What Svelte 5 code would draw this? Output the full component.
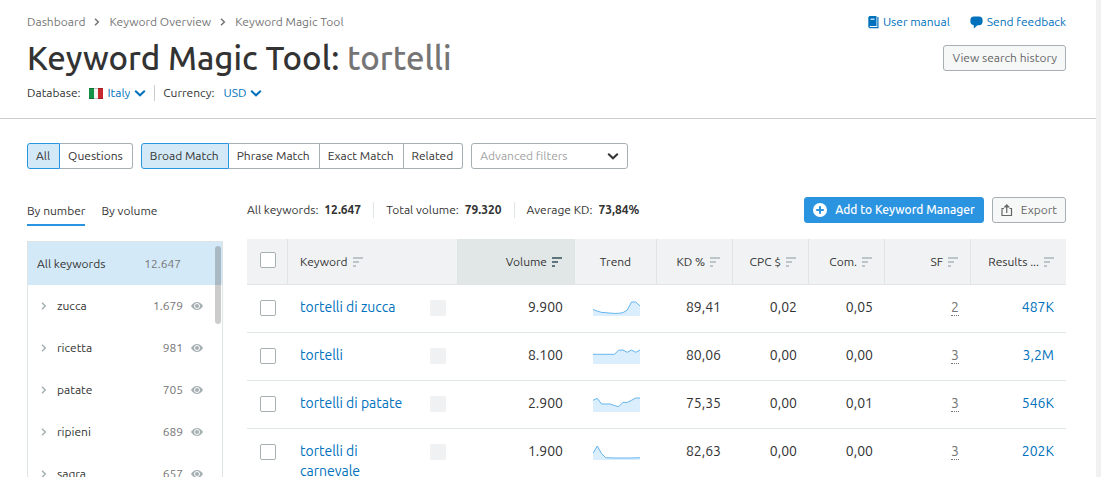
<script lang="ts">
	interface Keyword {
		phrase: string;
		volume: string;
		trend: number[];
		kd: string;
		cpc: string;
		com: string;
		sf: string;
		results: string;
	}

	const crumbs = ['Dashboard', 'Keyword Overview', 'Keyword Magic Tool'];
	const scopes = ['All', 'Questions'];
	const matches = ['Broad Match', 'Phrase Match', 'Exact Match', 'Related'];
	const tabs = ['By number', 'By volume'];

	const stats = [
		{ label: 'All keywords:', value: '12.647' },
		{ label: 'Total volume:', value: '79.320' },
		{ label: 'Average KD:', value: '73,84%' }
	];

	const groups = [
		{ name: 'zucca', count: '1.679' },
		{ name: 'ricetta', count: '981' },
		{ name: 'patate', count: '705' },
		{ name: 'ripieni', count: '689' },
		{ name: 'sagra', count: '657' }
	];

	const columns = [
		{ id: 'keyword', title: 'Keyword', sortable: true },
		{ id: 'volume', title: 'Volume', sortable: true },
		{ id: 'trend', title: 'Trend', sortable: false },
		{ id: 'kd', title: 'KD %', sortable: true },
		{ id: 'cpc', title: 'CPC $', sortable: true },
		{ id: 'com', title: 'Com.', sortable: true },
		{ id: 'sf', title: 'SF', sortable: true },
		{ id: 'results', title: 'Results ...', sortable: true }
	];

	const keywords: Keyword[] = [
		{
			phrase: 'tortelli di zucca',
			volume: '9.900',
			trend: [42, 30, 20, 18, 15, 12, 13, 18, 38, 100, 100, 70],
			kd: '89,41',
			cpc: '0,02',
			com: '0,05',
			sf: '2',
			results: '487K'
		},
		{
			phrase: 'tortelli',
			volume: '8.100',
			trend: [67, 67, 67, 67, 67, 67, 98, 100, 82, 100, 82, 100],
			kd: '80,06',
			cpc: '0,00',
			com: '0,00',
			sf: '3',
			results: '3,2M'
		},
		{
			phrase: 'tortelli di patate',
			volume: '2.900',
			trend: [82, 98, 54, 54, 54, 42, 34, 66, 66, 82, 100, 100],
			kd: '75,35',
			cpc: '0,00',
			com: '0,01',
			sf: '3',
			results: '546K'
		},
		{
			phrase: 'tortelli di carnevale',
			volume: '1.900',
			trend: [44, 100, 42, 9, 9, 8, 8, 8, 8, 8, 9, 9],
			kd: '82,63',
			cpc: '0,00',
			com: '0,00',
			sf: '3',
			results: '202K'
		}
	];

	let scope = $state('All');
	let match = $state('Broad Match');
	let tab = $state('By number');
	let sortBy = $state('volume');
	let selected = $state<string[]>([]);

	function toggleAll() {
		selected = selected.length === keywords.length ? [] : keywords.map((k) => k.phrase);
	}

	function trendLine(values: number[]): string {
		const step = 47 / (values.length - 1);
		return values.map((v, i) => `${(i * step).toFixed(1)},${(15 - v * 0.13).toFixed(1)}`).join(' ');
	}
</script>

{#snippet chevronDown()}
	<svg class="chevron-down" viewBox="0 0 12 8" width="12" height="8" aria-hidden="true">
		<path d="M1.2 1.700 6 6.300l4.800-4.600" />
	</svg>
{/snippet}

{#snippet chevronRight()}
	<svg class="chevron-right" viewBox="0 0 6 8" width="6" height="8" aria-hidden="true">
		<path d="M1 .8 4.300 4 1 7.200" />
	</svg>
{/snippet}

<div class="page">
	<header>
		<div class="header-row">
			<nav class="breadcrumbs" aria-label="Breadcrumb">
				{#each crumbs as crumb, i}
					{#if i > 0}{@render chevronRight()}{/if}
					<a href="#{i}">{crumb}</a>
				{/each}
			</nav>
			<div class="help-links">
				<a href="#manual">
					<svg viewBox="0 0 11 13" width="11" height="13" aria-hidden="true">
						<path d="M1.500 0H8.500V10H1.700V11H9.300V1H10.500V12.200H1.500L.300 11V1.200Z" fill="#0071bc" />
						<path d="M2.500 2.500h4v1.500h-4z" fill="#b5d8f0" />
					</svg>
					User manual
				</a>
				<a href="#feedback">
					<svg viewBox="0 0 13 13" width="13" height="13" aria-hidden="true">
						<path
							d="M4 .5h5a3.600 3.600 0 0 1 3.600 3.600v1.500A3.600 3.600 0 0 1 9 9.200H7.500L3.800 12.500V9.200A3.600 3.600 0 0 1 .4 5.600V4.100A3.600 3.600 0 0 1 4 .5z"
							fill="#0071bc"
						/>
					</svg>
					Send feedback
				</a>
			</div>
		</div>
		<div class="header-row title-row">
			<h1>Keyword Magic Tool: <span>tortelli</span></h1>
			<button class="button">View search history</button>
		</div>
		<div class="settings">
			<div class="setting">
				<label for="database">Database:</label>
				<svg class="flag" viewBox="0 0 14 11" width="14" height="11" aria-hidden="true">
					<path d="M0 0h5v11H0z" fill="#149247" />
					<path d="M5 0h4v11H5z" fill="#f4f4f0" />
					<path d="M9 0h5v11H9z" fill="#c8272d" />
					<path d="M0 .5h14M0 10.500h14" stroke="#000" stroke-opacity=".2" />
				</svg>
				<select id="database"><option>Italy</option></select>
				{@render chevronDown()}
			</div>
			<div class="setting">
				<label for="currency">Currency:</label>
				<select id="currency"><option>USD</option></select>
				{@render chevronDown()}
			</div>
		</div>
	</header>

	<div class="filters">
		<div class="pills">
			{#each scopes as item}
				<button class:active={scope === item} onclick={() => (scope = item)}>{item}</button>
			{/each}
		</div>
		<div class="pills">
			{#each matches as item}
				<button class:active={match === item} onclick={() => (match = item)}>{item}</button>
			{/each}
		</div>
		<div class="advanced">
			<select aria-label="Advanced filters"><option>Advanced filters</option></select>
			{@render chevronDown()}
		</div>
	</div>

	<div class="content">
		<aside>
			<div class="tabs">
				{#each tabs as item}
					<button class:active={tab === item} onclick={() => (tab = item)}>{item}</button>
				{/each}
			</div>
			<div class="groups">
				<a class="group all" href="#all">
					<span class="name">All keywords</span>
					<span class="count">12.647</span>
				</a>
				{#each groups as group}
					<div class="group">
						{@render chevronRight()}
						<a class="name" href="#{group.name}">{group.name}</a>
						<span class="count">{group.count}</span>
						<button class="eye" aria-label="Exclude {group.name}">
							<svg viewBox="0 0 12 8" width="12" height="8" aria-hidden="true">
								<path d="M0 4Q2.500 0 6 0t6 4Q9.500 8 6 8T0 4z" fill="#a6b0b3" />
								<circle cx="6" cy="4" r="2.500" fill="none" stroke="#fff" />
							</svg>
						</button>
					</div>
				{/each}
				<div class="thumb"></div>
			</div>
		</aside>

		<main>
			<div class="toolbar">
				<dl class="stats">
					{#each stats as stat}
						<div>
							<dt>{stat.label}</dt>
							<dd>{stat.value}</dd>
						</div>
					{/each}
				</dl>
				<button class="button primary">
					<svg viewBox="0 0 14 14" width="14" height="14" aria-hidden="true">
						<circle cx="7" cy="7" r="7" fill="#fff" />
						<path d="M7 3.200v7.600M3.200 7h7.600" stroke="#2b94e1" stroke-width="2" />
					</svg>
					Add to Keyword Manager
				</button>
				<button class="button">
					<svg viewBox="0 0 12 12" width="12" height="12" aria-hidden="true">
						<path d="M3 4.500H1v7h9.500v-7h-2M5.750 9V2" fill="none" stroke="#666" stroke-width="1.200" />
						<path d="M5.750 0 9 3.500H2.500z" fill="#666" />
					</svg>
					Export
				</button>
			</div>

			<table>
				<colgroup>
					<col class="col-check" />
					{#each columns as column}
						<col class="col-{column.id}" />
					{/each}
				</colgroup>
				<thead>
					<tr>
						<th class="check">
							<input
								type="checkbox"
								aria-label="Select all"
								checked={selected.length === keywords.length}
								onchange={toggleAll}
							/>
						</th>
						{#each columns as column}
							<th class={column.id} class:sorted={sortBy === column.id}>
								{#if column.sortable}
									<button onclick={() => (sortBy = column.id)}>
										{column.title}
										<svg viewBox="0 0 10 10" width="10" height="10" aria-hidden="true">
											<path d="M0 0h10v2H0zM0 4h6v2H0zM0 8h3v2H0z" />
										</svg>
									</button>
								{:else}
									{column.title}
								{/if}
							</th>
						{/each}
					</tr>
				</thead>
				<tbody>
					{#each keywords as keyword}
						<tr>
							<td>
								<input
									type="checkbox"
									aria-label="Select {keyword.phrase}"
									value={keyword.phrase}
									bind:group={selected}
								/>
							</td>
							<td class="keyword">
								<div class="phrase">
									<a href="#{keyword.phrase}">{keyword.phrase}</a>
									<span class="placeholder"></span>
								</div>
							</td>
							<td>{keyword.volume}</td>
							<td class="trend">
								<svg viewBox="0 0 47 16" width="47" height="16" aria-hidden="true">
									<polygon points="0,16 {trendLine(keyword.trend)} 47,16" fill="#daeefd" />
									<polyline points={trendLine(keyword.trend)} fill="none" stroke="#63b4ee" />
								</svg>
							</td>
							<td>{keyword.kd}</td>
							<td>{keyword.cpc}</td>
							<td>{keyword.com}</td>
							<td><span class="features">{keyword.sf}</span></td>
							<td><a href="#results">{keyword.results}</a></td>
						</tr>
					{/each}
				</tbody>
			</table>
		</main>
	</div>
</div>

<style>
	:global(body) {
		overflow: hidden;
	}

	.page {
		box-sizing: border-box;
		height: 100vh;
		overflow: hidden;
		border-right: 5px solid #f1f1f1;
		background: #fff;
		color: #333;
		font-family: Ubuntu, 'Noto Sans', sans-serif;
		font-size: 12px;
		line-height: 16px;
	}

	a {
		color: #0071bc;
		text-decoration: none;
	}

	button,
	select {
		box-sizing: border-box;
		margin: 0;
		padding: 0;
		border: 0;
		background: none;
		color: inherit;
		font: inherit;
		cursor: pointer;
	}

	select {
		appearance: none;
	}

	svg {
		flex: none;
	}

	header {
		padding: 14px 30px 17px 27px;
		border-bottom: 1px solid #ccc;
	}

	.header-row {
		display: flex;
		justify-content: space-between;
		align-items: center;
	}

	.breadcrumbs {
		display: flex;
		align-items: center;
		gap: 9px;
	}

	.breadcrumbs a {
		color: #757575;
	}

	.chevron-right,
	.chevron-down {
		fill: none;
		stroke: #757575;
		stroke-width: 1.5;
	}

	.help-links {
		display: flex;
		gap: 20px;
	}

	.help-links a {
		display: flex;
		align-items: center;
		gap: 4px;
	}

	.title-row {
		height: 55px;
	}

	h1 {
		margin: 0;
		font-size: 33px;
		font-weight: 500;
		line-height: 40px;
	}

	h1 span {
		color: #757575;
	}

	.button {
		display: flex;
		align-items: center;
		gap: 8px;
		height: 26px;
		padding: 0 8px;
		border: 1px solid #a6b0b3;
		border-radius: 3px;
		background: #f6f8f8;
		color: #666;
		white-space: nowrap;
	}

	.button.primary {
		border-color: #2b94e1;
		background: #2b94e1;
		color: #fff;
		font-weight: 500;
	}

	.settings {
		display: flex;
		align-items: center;
	}

	.setting {
		display: flex;
		align-items: center;
		gap: 4px;
	}

	.setting + .setting {
		margin-left: 8px;
		padding-left: 8px;
		border-left: 1px solid #ccc;
	}

	.setting label {
		margin-right: 5px;
	}

	.setting select {
		field-sizing: content;
		color: #0071bc;
	}

	.setting .chevron-down {
		stroke: #0071bc;
		stroke-width: 2;
	}

	.filters {
		display: flex;
		gap: 8px;
		padding: 24px 30px 28px 27px;
	}

	.pills {
		display: flex;
	}

	.pills button {
		height: 26px;
		padding: 0 9px 0 8px;
		border: 1px solid #a6b0b3;
		border-left-width: 0;
	}

	.pills button:first-child {
		border-left-width: 1px;
		border-radius: 3px 0 0 3px;
	}

	.pills button:last-child {
		border-radius: 0 3px 3px 0;
	}

	.pills .active {
		border-color: #2b94e1;
		background: #d4e9f7;
	}

	.advanced {
		display: grid;
		align-items: center;
		width: 157px;
	}

	.advanced > :global(*) {
		grid-area: 1 / 1;
	}

	.advanced select {
		width: 100%;
		height: 26px;
		padding: 0 8px;
		border: 1px solid #a6b0b3;
		border-radius: 3px;
		color: #a3a3a3;
	}

	.advanced .chevron-down {
		justify-self: end;
		margin-right: 9px;
		stroke: #333;
		stroke-width: 2;
		pointer-events: none;
	}

	.content {
		display: flex;
		align-items: flex-start;
		gap: 24px;
		padding: 0 30px 0 27px;
	}

	aside {
		flex: 0 0 196px;
	}

	.tabs {
		display: flex;
		gap: 16px;
		margin-bottom: 15px;
	}

	.tabs button {
		height: 29px;
		border-bottom: 2px solid transparent;
	}

	.tabs .active {
		border-color: #2b94e1;
	}

	.groups {
		position: relative;
		border: 1px solid #dfe4e5;
	}

	.group {
		display: flex;
		align-items: center;
		height: 42px;
		padding: 0 19px 0 13px;
	}

	.group.all {
		height: 43px;
		padding: 0 41px 0 9px;
		background: #d4e9f7;
	}

	.group .chevron-right {
		margin-right: 10px;
		stroke: #a6b0b3;
	}

	.name {
		flex: 1;
		color: #333;
	}

	.count {
		color: #757575;
	}

	.eye {
		display: flex;
		margin-left: 8px;
	}

	.thumb {
		position: absolute;
		top: 4px;
		right: 1px;
		width: 6px;
		height: 78px;
		border-radius: 3px;
		background: rgba(0, 0, 0, 0.2);
	}

	main {
		flex: 1;
		min-width: 0;
	}

	.toolbar {
		display: flex;
		gap: 8px;
		margin-bottom: 16px;
	}

	.stats {
		display: flex;
		flex: 1;
		align-items: center;
		margin: 0;
	}

	.stats div {
		display: flex;
		gap: 6px;
	}

	.stats div + div {
		margin-left: 12px;
		padding-left: 12px;
		border-left: 1px solid #dfe4e5;
	}

	.stats dd {
		margin: 0;
		font-weight: 600;
	}

	table {
		width: 100%;
		table-layout: fixed;
		border-collapse: separate;
		border-spacing: 0;
	}

	.col-check {
		width: 41px;
	}

	.col-volume {
		width: 117px;
	}

	.col-trend {
		width: 82px;
	}

	.col-kd,
	.col-cpc,
	.col-com {
		width: 76px;
	}

	.col-sf {
		width: 86px;
	}

	.col-results {
		width: 95px;
	}

	th {
		box-sizing: border-box;
		height: 46px;
		padding: 0 12px;
		border-right: 1px solid #dfe4e5;
		border-bottom: 1px solid #dfe4e5;
		background: #f0f2f4;
		font-weight: 400;
		text-align: right;
	}

	th:last-child {
		border-right: 0;
	}

	th.check {
		padding-top: 13px;
		vertical-align: top;
	}

	th.keyword {
		text-align: left;
	}

	th.trend {
		text-align: center;
	}

	th.sorted {
		background: #e1e6e7;
	}

	th button {
		display: inline-flex;
		align-items: center;
		gap: 5px;
		white-space: nowrap;
	}

	th svg {
		fill: #bcc5c7;
	}

	th.sorted svg {
		fill: #5f757c;
	}

	td {
		padding: 12px 12px 15px;
		border-bottom: 1px solid #dfe4e5;
		font-size: 14px;
		line-height: 20px;
		text-align: right;
		vertical-align: top;
	}

	td.keyword {
		text-align: left;
	}

	td.trend {
		text-align: center;
	}

	td.trend svg {
		display: inline-block;
		vertical-align: middle;
	}

	input[type='checkbox'] {
		display: block;
		box-sizing: border-box;
		width: 16px;
		height: 16px;
		margin: 3px 0 0 1px;
		appearance: none;
		border: 1px solid #a6b0b3;
		border-radius: 2px;
		background: #fff;
	}

	th input[type='checkbox'] {
		margin-top: 0;
	}

	input[type='checkbox']:checked {
		background: #2b94e1;
	}

	.phrase {
		display: flex;
		justify-content: space-between;
		gap: 12px;
	}

	.placeholder {
		flex: none;
		width: 16px;
		height: 16px;
		margin-top: 3px;
		border-radius: 2px;
		background: #f0f1f3;
	}

	.features {
		display: inline-block;
		border-bottom: 1px dotted #757575;
		color: #757575;
		line-height: 16px;
	}
</style>
